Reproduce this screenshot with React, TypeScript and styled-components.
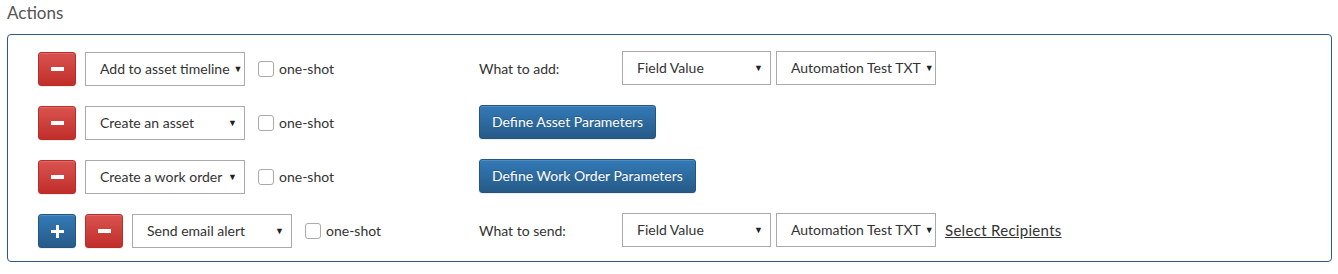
import React from 'react';
import styled, { createGlobalStyle } from 'styled-components';

const GlobalStyle = createGlobalStyle`
  body {
    margin: 0;
    background: #fff;
    font-family: Lato, 'Open Sans', sans-serif;
    color: #333;
  }
`;

const Page = styled.div`
  padding: 0 6px 0 7px;
`;

const Title = styled.h3`
  margin: 0;
  padding-top: 2px;
  height: 32px;
  font-size: 17px;
  font-weight: 400;
  color: #555;
  line-height: 22px;
`;

const Panel = styled.div`
  border: 1px solid #2b5a84;
  border-radius: 4px;
  padding: 16px 30px 14px 30px;
  display: flex;
  flex-direction: column;
  gap: 20px;
`;

const Row = styled.div`
  display: grid;
  grid-template-columns: 441px 1fr;
  align-items: center;
  height: 34px;
`;

const Left = styled.div`
  display: flex;
  align-items: center;
  gap: 9px;
`;

const Right = styled.div`
  display: flex;
  align-items: center;
  padding-bottom: 2px;
`;

const IconButton = styled.button<{ variant: 'danger' | 'primary' }>`
  width: 38px;
  height: 34px;
  padding: 0;
  border-radius: 3px;
  display: flex;
  align-items: center;
  justify-content: center;
  cursor: pointer;
  border: 1px solid ${p => (p.variant === 'danger' ? '#b92c28' : '#245580')};
  background-image: ${p =>
    p.variant === 'danger'
      ? 'linear-gradient(to bottom, #d9534f 0, #c12e2a 100%)'
      : 'linear-gradient(to bottom, #337ab7 0, #265a88 100%)'};
  box-shadow: inset 0 1px 0 rgba(255, 255, 255, 0.15), 0 1px 1px rgba(0, 0, 0, 0.075);
`;

const ActionButton = styled.button`
  height: 34px;
  padding: 0 12px 2px;
  border-radius: 3px;
  border: 1px solid #245580;
  background-image: linear-gradient(to bottom, #337ab7 0, #265a88 100%);
  box-shadow: inset 0 1px 0 rgba(255, 255, 255, 0.15), 0 1px 1px rgba(0, 0, 0, 0.075);
  color: #fff;
  font-family: Lato, 'Open Sans', sans-serif;
  font-size: 14px;
  cursor: pointer;
  text-shadow: 0 -1px 0 rgba(0, 0, 0, 0.2);
`;

const SelectBox = styled.div<{ width: number }>`
  box-sizing: border-box;
  width: ${p => p.width}px;
  height: 34px;
  border: 1px solid #aaa;
  background: #fff;
  display: flex;
  align-items: center;
  justify-content: space-between;
  padding: 0 7px 2px 14px;
  font-size: 14px;
  color: #333;
  white-space: nowrap;
`;

const Caret = styled.span`
  font-size: 9px;
  color: #222;
  margin-left: 4px;
`;

const CheckGroup = styled.label`
  display: flex;
  align-items: center;
  gap: 5px;
  margin-left: 4px;
  font-size: 14px;
  color: #333;
  padding-bottom: 2px;
`;

const CheckBox = styled.span`
  box-sizing: border-box;
  width: 16px;
  height: 16px;
  border: 1px solid #aaa;
  border-radius: 3px;
  background: #fff;
  margin-top: 2px;
`;

const FieldLabel = styled.span`
  width: 143px;
  font-size: 14px;
  color: #333;
`;

const Gap = styled.span<{ size: number }>`
  width: ${p => p.size}px;
  flex: none;
`;

const LinkText = styled.a`
  font-size: 15px;
  letter-spacing: 0.3px;
  color: #333;
  text-decoration: underline;
  cursor: pointer;
`;

const MinusIcon = () => (
  <svg width="13" height="4" viewBox="0 0 13 4">
    <rect x="0" y="0" width="13" height="4" fill="#fff" />
  </svg>
);

const PlusIcon = () => (
  <svg width="13" height="13" viewBox="0 0 13 13">
    <rect x="0" y="5" width="13" height="3" fill="#fff" />
    <rect x="5" y="0" width="3" height="13" fill="#fff" />
  </svg>
);

const Select: React.FC<{ width: number; value: string }> = ({ width, value }) => (
  <SelectBox width={width}>
    <span>{value}</span>
    <Caret>▼</Caret>
  </SelectBox>
);

const OneShot = () => (
  <CheckGroup>
    <CheckBox />
    one-shot
  </CheckGroup>
);

const ValuePickers: React.FC<{ label: string }> = ({ label }) => (
  <>
    <FieldLabel>{label}</FieldLabel>
    <Select width={149} value="Field Value" />
    <Gap size={5} />
    <Select width={160} value="Automation Test TXT" />
  </>
);

export default function App() {
  return (
    <Page>
      <GlobalStyle />
      <Title>Actions</Title>
      <Panel>
        <Row>
          <Left>
            <IconButton variant="danger"><MinusIcon /></IconButton>
            <Select width={160} value="Add to asset timeline" />
            <OneShot />
          </Left>
          <Right>
            <ValuePickers label="What to add:" />
          </Right>
        </Row>
        <Row>
          <Left>
            <IconButton variant="danger"><MinusIcon /></IconButton>
            <Select width={160} value="Create an asset" />
            <OneShot />
          </Left>
          <Right>
            <ActionButton>Define Asset Parameters</ActionButton>
          </Right>
        </Row>
        <Row>
          <Left>
            <IconButton variant="danger"><MinusIcon /></IconButton>
            <Select width={160} value="Create a work order" />
            <OneShot />
          </Left>
          <Right>
            <ActionButton>Define Work Order Parameters</ActionButton>
          </Right>
        </Row>
        <Row>
          <Left>
            <IconButton variant="primary"><PlusIcon /></IconButton>
            <IconButton variant="danger"><MinusIcon /></IconButton>
            <Select width={160} value="Send email alert" />
            <OneShot />
          </Left>
          <Right>
            <ValuePickers label="What to send:" />
            <Gap size={9} />
            <LinkText>Select Recipients</LinkText>
          </Right>
        </Row>
      </Panel>
    </Page>
  );
}
